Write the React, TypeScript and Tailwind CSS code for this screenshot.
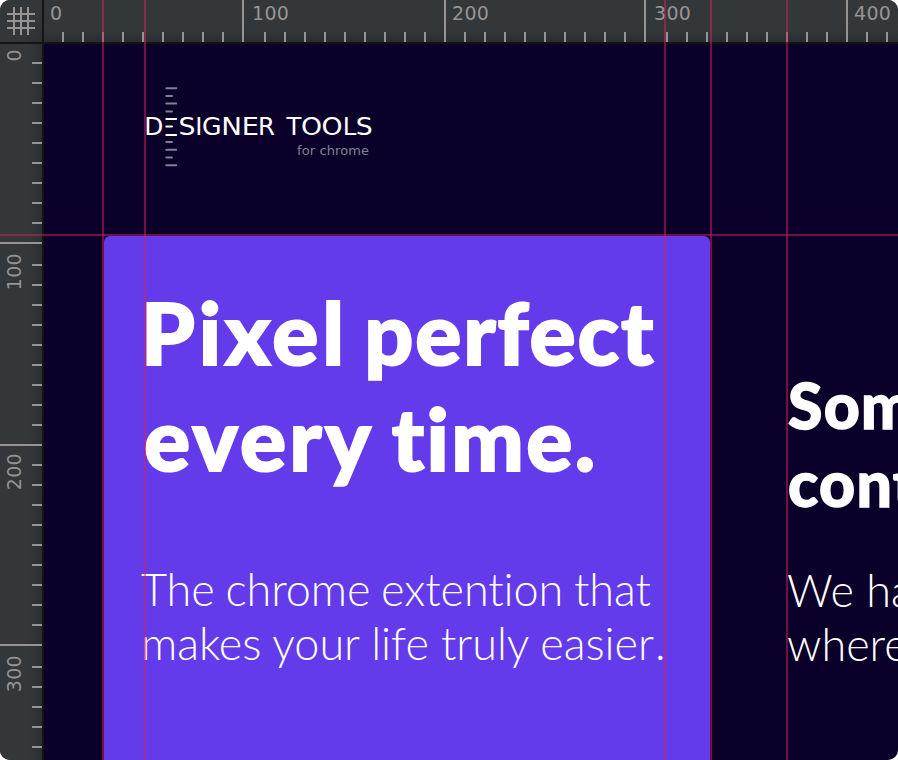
const TICKS = [
  62, 82, 102, 122, 142, 162, 182, 202, 222, 242, 264, 284, 304, 324, 344, 364, 384, 404, 424, 444,
  464, 484, 504, 524, 544, 564, 584, 604, 624, 644, 666, 686, 706, 726, 746, 766, 786, 806, 826, 846,
  866, 886,
];
const MAJOR = [242, 444, 644, 846];
const H_LABELS = [
  { text: "0", at: 50 },
  { text: "100", at: 252 },
  { text: "200", at: 452 },
  { text: "300", at: 654 },
  { text: "400", at: 854 },
];
const V_LABELS = [
  { text: "0", at: 49 },
  { text: "100", at: 253 },
  { text: "200", at: 453 },
  { text: "300", at: 655 },
];
const OFFSET = 44;

function HorizontalRuler() {
  return (
    <div className="grid h-[44px] min-w-0 overflow-hidden border-b-2 border-[#131413] bg-linear-to-b from-[#34373a] from-70% to-[#2c2f30]">
      <div className="col-start-1 row-start-1 flex items-end">
        {TICKS.map((t, i) => (
          <div
            key={t}
            className={`w-[2px] shrink-0 bg-[#969493] ${MAJOR.includes(t) ? "h-full" : "h-[10px]"}`}
            style={{ marginLeft: t - (i ? TICKS[i - 1] + 2 : OFFSET) }}
          />
        ))}
      </div>
      <div className="col-start-1 row-start-1 flex pt-[2px]">
        {H_LABELS.map((l, i) => (
          <div
            key={l.text}
            className="w-0 shrink-0 text-[19px] leading-[22px] tracking-[0.3px] whitespace-nowrap text-[#969493]"
            style={{ marginLeft: l.at - (i ? H_LABELS[i - 1].at : OFFSET) }}
          >
            {l.text}
          </div>
        ))}
      </div>
    </div>
  );
}

function VerticalRuler() {
  return (
    <div className="grid min-h-0 w-[44px] overflow-hidden border-r-2 border-[#131413] bg-linear-to-r from-[#34373a] from-70% to-[#2c2f30]">
      <div className="col-start-1 row-start-1 flex flex-col items-end">
        {TICKS.filter((t) => t < 760).map((t, i) => (
          <div
            key={t}
            className={`h-[2px] shrink-0 bg-[#969493] ${MAJOR.includes(t) ? "w-full" : "w-[10px]"}`}
            style={{ marginTop: t - (i ? TICKS[i - 1] + 2 : OFFSET) }}
          />
        ))}
      </div>
      <div className="col-start-1 row-start-1 flex flex-col pl-[3px]">
        {V_LABELS.map((l, i) => (
          <div
            key={l.text}
            className="h-0 w-[22px] shrink-0"
            style={{ marginTop: l.at - (i ? V_LABELS[i - 1].at : OFFSET) }}
          >
            <div className="w-[22px] rotate-180 text-[19px] leading-[22px] tracking-[0.3px] whitespace-nowrap text-[#969493] [writing-mode:vertical-rl]">
              {l.text}
            </div>
          </div>
        ))}
      </div>
    </div>
  );
}

function GridButton() {
  return (
    <div className="h-[44px] w-[44px] border-r-2 border-b-2 border-[#131413] bg-linear-to-br from-[#34373a] from-70% to-[#2c2f30]">
      <svg width="42" height="42" viewBox="0 0 42 42" stroke="#969493" strokeWidth="2">
        <path d="M14 7V35M21 7V35M28 7V35M7 14H35M7 21H35M7 28H35" />
      </svg>
    </div>
  );
}

const LETTERS = [
  { ch: "D", x: 144.2, s: 1.02 },
  { ch: "S", x: 178.4, s: 1.1 },
  { ch: "I", x: 195.2, s: 1 },
  { ch: "G", x: 202, s: 1.04 },
  { ch: "N", x: 221.2, s: 1.14 },
  { ch: "E", x: 241.7, s: 1.12 },
  { ch: "R", x: 258, s: 1 },
  { ch: "T", x: 286.4, s: 1 },
  { ch: "O", x: 300.9, s: 1.1 },
  { ch: "O", x: 321.5, s: 1.1 },
  { ch: "L", x: 342.8, s: 1 },
  { ch: "S", x: 355.8, s: 1.1 },
];

function Logo() {
  return (
    <svg width="240" height="90" viewBox="140 82 240 90" className="block">
      <g stroke="#857f94" strokeWidth="2" strokeLinecap="round">
        <path d="M166.3 88.2H176.2M166.3 96H172M166.3 103.6H176.2M166.3 111.4H172M166.3 142H172M166.3 149.7H176.2M166.3 157.4H172M166.3 165.2H176.2" />
      </g>
      <path d="M166.3 119H176.2M166.3 126.5H172M166.3 135H176.2" stroke="#fff" strokeWidth="2" strokeLinecap="round" />
      <g fill="#fff" fontFamily="'DejaVu Sans', sans-serif" fontSize="24.3">
        {LETTERS.map((l) => (
          <text key={l.x} transform={`translate(${l.x} 135.4) scale(${l.s} 1)`}>
            {l.ch}
          </text>
        ))}
      </g>
      <text x="297" y="155" fill="#857f94" fontFamily="'DejaVu Sans', sans-serif" fontSize="13" textLength="72">
        for chrome
      </text>
    </svg>
  );
}

function Guides() {
  return (
    <div className="pointer-events-none absolute inset-0">
      <div className="absolute inset-y-0 left-[102px] w-[2px] bg-[#d9205a]/50" />
      <div className="absolute inset-y-0 left-[144px] w-[2px] bg-[#d9205a]/50" />
      <div className="absolute inset-y-0 left-[664px] w-[2px] bg-[#d9205a]/50" />
      <div className="absolute inset-y-0 left-[710px] w-[2px] bg-[#d9205a]/50" />
      <div className="absolute inset-y-0 left-[786px] w-[2px] bg-[#d9205a]/50" />
      <div className="absolute inset-x-0 top-[234px] h-[2px] bg-[#d9205a]/50" />
    </div>
  );
}

export default function App() {
  return (
    <div className="h-[760px] w-[898px] bg-white">
      <div className="relative grid h-full grid-cols-[44px_854px] grid-rows-[44px_716px] overflow-hidden rounded-[10px] bg-[#0b0029] font-['DejaVu_Sans',sans-serif]">
        <GridButton />
        <HorizontalRuler />
        <VerticalRuler />
        <main className="flex flex-col overflow-hidden font-['Lato',sans-serif] text-white [font-variant-ligatures:none]">
          <header className="h-[192px] shrink-0 pt-[38px] pl-[96px]">
            <Logo />
          </header>
          <div className="flex flex-1 pl-[60px]">
            <section className="w-[606px] shrink-0 rounded-t-[6px] bg-[#633beb] pt-[43px] pl-[36px] whitespace-nowrap">
              <h1 className="text-[86px] leading-[106px] font-black [-webkit-text-stroke:2px_white]">
                <span className="block pl-[1px] [word-spacing:-8px]">
                  <span className="tracking-[3.8px]">Pixel </span>
                  <span className="tracking-[1.9px]">perfect</span>
                </span>
                <span className="block pl-[4px] [word-spacing:-4px]">
                  <span className="tracking-[3.3px]">every </span>
                  <span className="tracking-[2.4px]">time.</span>
                </span>
              </h1>
              <p className="mt-[71px] text-[45px] leading-[54px] font-light">
                <span className="block pl-[1px] tracking-[-0.08px] [word-spacing:-1.4px]">The chrome extention that</span>
                <span className="block pl-[1px] tracking-[-0.05px]">
                  makes your life truly easie<span className="tracking-[1px]">r</span>.
                </span>
              </p>
            </section>
            <section className="ml-[78px] w-[110px] shrink-0 pt-[130px] whitespace-nowrap">
              <h2 className="text-[62.5px] leading-[78px] font-black tracking-[1.3px] [-webkit-text-stroke:1.4px_white]">
                <span className="block">Som</span>
                <span className="block">cont</span>
              </h2>
              <p className="-ml-[1px] mt-[41px] text-[45px] leading-[54px] font-light">
                <span className="block">We ha</span>
                <span className="block">where</span>
              </p>
            </section>
          </div>
        </main>
        <Guides />
      </div>
    </div>
  );
}
